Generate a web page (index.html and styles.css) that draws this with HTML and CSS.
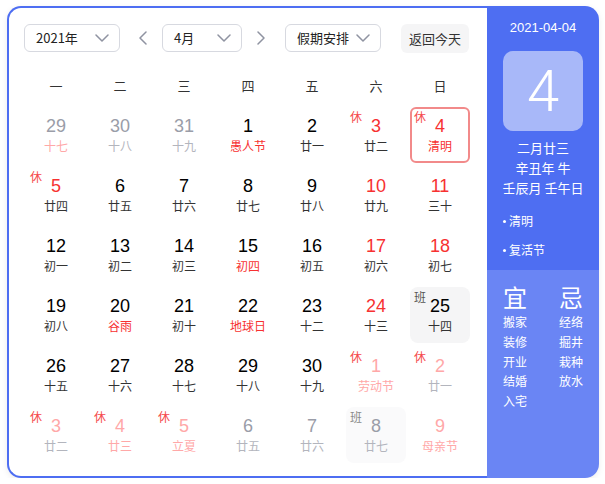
FILE: index.html
```html
<!DOCTYPE html>
<html lang="zh-CN">
<head>
<meta charset="utf-8">
<title>万年历</title>
<link rel="stylesheet" href="styles.css">
</head>
<body>
<div class="cal">
  <div class="main">
    <div class="toolbar">
      <div class="select sel-year"><span>2021年</span><svg class="chev" viewBox="0 0 14 8" width="14" height="8"><path d="M1 1 L7 7 L13 1" /></svg></div>
      <svg class="arrow arrow-prev" viewBox="0 0 10 14" width="10" height="14"><path d="M8 1 L2 7 L8 13" /></svg>
      <div class="select sel-month"><span>4月</span><svg class="chev" viewBox="0 0 14 8" width="14" height="8"><path d="M1 1 L7 7 L13 1" /></svg></div>
      <svg class="arrow arrow-next" viewBox="0 0 10 14" width="10" height="14"><path d="M2 1 L8 7 L2 13" /></svg>
      <div class="select sel-holiday"><span>假期安排</span><svg class="chev" viewBox="0 0 14 8" width="14" height="8"><path d="M1 1 L7 7 L13 1" /></svg></div>
      <div class="today-btn">返回今天</div>
    </div>
    <div class="weekdays">
      <span>一</span><span>二</span><span>三</span><span>四</span><span>五</span><span>六</span><span>日</span>
    </div>
    <div class="grid">
      <div class="cell other"><div class="num">29</div><div class="lunar pink">十七</div></div>
      <div class="cell other"><div class="num">30</div><div class="lunar">十八</div></div>
      <div class="cell other"><div class="num">31</div><div class="lunar">十九</div></div>
      <div class="cell"><div class="num">1</div><div class="lunar red">愚人节</div></div>
      <div class="cell"><div class="num">2</div><div class="lunar">廿一</div></div>
      <div class="cell"><span class="mark rest">休</span><div class="num red">3</div><div class="lunar">廿二</div></div>
      <div class="cell selected"><span class="mark rest">休</span><div class="num red">4</div><div class="lunar red">清明</div></div>

      <div class="cell"><span class="mark rest">休</span><div class="num red">5</div><div class="lunar">廿四</div></div>
      <div class="cell"><div class="num">6</div><div class="lunar">廿五</div></div>
      <div class="cell"><div class="num">7</div><div class="lunar">廿六</div></div>
      <div class="cell"><div class="num">8</div><div class="lunar">廿七</div></div>
      <div class="cell"><div class="num">9</div><div class="lunar">廿八</div></div>
      <div class="cell"><div class="num red">10</div><div class="lunar">廿九</div></div>
      <div class="cell"><div class="num red">11</div><div class="lunar">三十</div></div>

      <div class="cell"><div class="num">12</div><div class="lunar">初一</div></div>
      <div class="cell"><div class="num">13</div><div class="lunar">初二</div></div>
      <div class="cell"><div class="num">14</div><div class="lunar">初三</div></div>
      <div class="cell"><div class="num">15</div><div class="lunar red">初四</div></div>
      <div class="cell"><div class="num">16</div><div class="lunar">初五</div></div>
      <div class="cell"><div class="num red">17</div><div class="lunar">初六</div></div>
      <div class="cell"><div class="num red">18</div><div class="lunar">初七</div></div>

      <div class="cell"><div class="num">19</div><div class="lunar">初八</div></div>
      <div class="cell"><div class="num">20</div><div class="lunar red">谷雨</div></div>
      <div class="cell"><div class="num">21</div><div class="lunar">初十</div></div>
      <div class="cell"><div class="num">22</div><div class="lunar red">地球日</div></div>
      <div class="cell"><div class="num">23</div><div class="lunar">十二</div></div>
      <div class="cell"><div class="num red">24</div><div class="lunar">十三</div></div>
      <div class="cell work"><span class="mark shift">班</span><div class="num">25</div><div class="lunar">十四</div></div>

      <div class="cell"><div class="num">26</div><div class="lunar">十五</div></div>
      <div class="cell"><div class="num">27</div><div class="lunar">十六</div></div>
      <div class="cell"><div class="num">28</div><div class="lunar">十七</div></div>
      <div class="cell"><div class="num">29</div><div class="lunar">十八</div></div>
      <div class="cell"><div class="num">30</div><div class="lunar">十九</div></div>
      <div class="cell other"><span class="mark rest">休</span><div class="num pink">1</div><div class="lunar pink">劳动节</div></div>
      <div class="cell other"><span class="mark rest">休</span><div class="num pink">2</div><div class="lunar">廿一</div></div>

      <div class="cell other"><span class="mark rest">休</span><div class="num pink">3</div><div class="lunar">廿二</div></div>
      <div class="cell other"><span class="mark rest">休</span><div class="num pink">4</div><div class="lunar pink">廿三</div></div>
      <div class="cell other"><span class="mark rest">休</span><div class="num pink">5</div><div class="lunar pink">立夏</div></div>
      <div class="cell other"><div class="num">6</div><div class="lunar">廿五</div></div>
      <div class="cell other"><div class="num">7</div><div class="lunar">廿六</div></div>
      <div class="cell other work"><span class="mark shift">班</span><div class="num">8</div><div class="lunar">廿七</div></div>
      <div class="cell other"><div class="num pink">9</div><div class="lunar pink">母亲节</div></div>
    </div>
  </div>
  <div class="side">
    <div class="side-top">
      <div class="side-date">2021-04-04</div>
      <div class="side-day">4</div>
      <div class="side-lunar">
        <div>二月廿三</div>
        <div>辛丑年 牛</div>
        <div>壬辰月 壬午日</div>
      </div>
      <ul class="festivals">
        <li>清明</li>
        <li class="fest-2">复活节</li>
      </ul>
    </div>
    <div class="side-bottom">
      <div class="yiji">
        <div class="yiji-title">宜</div>
        <div class="yiji-item">搬家</div>
        <div class="yiji-item">装修</div>
        <div class="yiji-item">开业</div>
        <div class="yiji-item">结婚</div>
        <div class="yiji-item">入宅</div>
      </div>
      <div class="yiji">
        <div class="yiji-title">忌</div>
        <div class="yiji-item">经络</div>
        <div class="yiji-item">掘井</div>
        <div class="yiji-item">栽种</div>
        <div class="yiji-item">放水</div>
      </div>
    </div>
  </div>
</div>
</body>
</html>
```

FILE: styles.css
```css
* { box-sizing: border-box; }

html, body {
  margin: 0;
  padding: 0;
  background: #ffffff;
}

body {
  font-family: "Noto Sans CJK SC", "Liberation Sans", sans-serif;
  color: #333333;
}

.cal {
  display: flex;
  width: 592px;
  height: 472px;
  margin: 6px 0 0 7px;
  border-radius: 14px;
  box-shadow: 0 2px 6px rgba(0, 0, 0, 0.08);
}

.main {
  width: 480px;
  border: 2px solid #4e6ef2;
  border-right: none;
  border-radius: 14px 0 0 14px;
  padding: 16px 0 0 15px;
  background: #ffffff;
}

.toolbar {
  display: flex;
  align-items: center;
  height: 28px;
}

.select {
  display: flex;
  align-items: center;
  justify-content: space-between;
  height: 28px;
  border: 1px solid #d7d9e0;
  border-radius: 6px;
  padding: 0 10px 0 11px;
  font-size: 13px;
  color: #222222;
  background: #ffffff;
}

.select span { line-height: 26px; }

.sel-year { width: 96px; }
.sel-month { width: 80px; }
.sel-holiday { width: 96px; }

.chev path,
.arrow path {
  fill: none;
  stroke: #8f93a1;
  stroke-width: 1.5;
  stroke-linecap: round;
  stroke-linejoin: round;
}

.arrow-prev { margin: 0 14px 0 18px; }
.arrow-next { margin: 0 19px 0 14px; }

.today-btn {
  margin-left: 20px;
  width: 68px;
  height: 29px;
  line-height: 29px;
  border-radius: 6px;
  background: #f5f5f6;
  text-align: center;
  font-size: 13px;
  color: #333333;
}

.weekdays {
  display: grid;
  grid-template-columns: repeat(7, 60px);
  column-gap: 4px;
  margin: 20px 0 0 2px;
  height: 28px;
  line-height: 28px;
  font-size: 13px;
  color: #333333;
  text-align: center;
}

.grid {
  display: grid;
  grid-template-columns: repeat(7, 60px);
  grid-auto-rows: 56px;
  gap: 4px;
  margin: 7px 0 0 2px;
}

.cell {
  position: relative;
  padding-top: 8px;
  border-radius: 6px;
  text-align: center;
}

.num {
  font-family: "Liberation Sans", Arial, sans-serif;
  font-size: 18px;
  line-height: 22px;
  color: #000000;
}

.lunar {
  font-size: 12px;
  line-height: 18px;
  color: #333333;
}

.red { color: #f73131; }

.other .num { color: #9a9da8; }
.other .lunar { color: #b3b5bd; }
.other .num.pink,
.other .lunar.pink { color: #ffa8a8; }

.mark {
  position: absolute;
  left: 4px;
  top: 2px;
  font-size: 12px;
  line-height: 16px;
}

.rest { color: #f5484a; }
.shift { color: #555555; }
.other .shift { color: #8a8a8a; }

.selected {
  border: 2px solid #f28a8a;
  padding-top: 6px;
}

.selected .mark { left: 2px; top: 0; }

.work { background: #f5f5f6; border-radius: 8px; }
.other.work { background: #fafafb; }

.side {
  width: 112px;
  display: flex;
  flex-direction: column;
  border-radius: 0 14px 14px 0;
  overflow: hidden;
  color: #ffffff;
}

.side-top {
  height: 264px;
  background: #4e6ef2;
  padding-top: 12px;
}

.side-date {
  font-family: "Liberation Sans", Arial, sans-serif;
  font-size: 13px;
  line-height: 20px;
  text-align: center;
}

.side-day {
  width: 80px;
  height: 80px;
  margin: 13px auto 0;
  border-radius: 10px;
  background: #a8b8f9;
  font-family: "Roboto", "Liberation Sans", sans-serif;
  font-weight: 300;
  font-size: 58px;
  line-height: 80px;
  text-align: center;
}

.side-lunar {
  margin-top: 7px;
  font-size: 13px;
  line-height: 20px;
  text-align: center;
}

.festivals {
  list-style: none;
  margin: 13px 0 0;
  padding: 0 0 0 16px;
  font-size: 12px;
  line-height: 20px;
}

.festivals li {
  display: flex;
  align-items: center;
}

.festivals li::before {
  content: "";
  width: 3px;
  height: 3px;
  border-radius: 50%;
  background: #ffffff;
  margin-right: 3px;
}

.festivals .fest-2 { margin-top: 9px; }

.side-bottom {
  flex: 1;
  background: #6a85f4;
  display: grid;
  grid-template-columns: 56px 1fr;
  padding: 12px 0 0 16px;
  align-content: start;
}

.yiji-title {
  font-size: 24px;
  line-height: 30px;
}

.yiji-item {
  font-size: 12px;
  line-height: 19.75px;
}
```
